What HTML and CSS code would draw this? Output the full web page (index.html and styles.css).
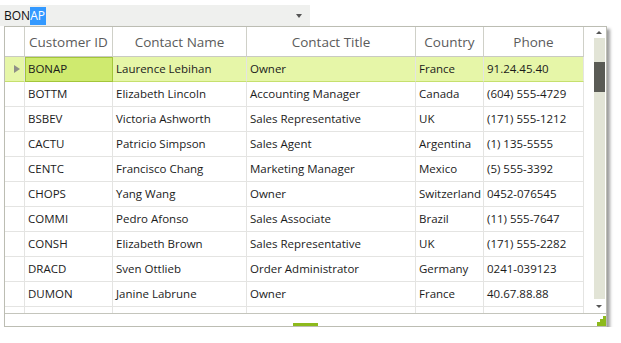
FILE: index.html
```html
<!DOCTYPE html>
<html lang="en">
<head>
    <meta charset="UTF-8">
    <meta name="viewport" content="width=device-width, initial-scale=1.0">
    <title>Customers Grid</title>
    <link rel="stylesheet" href="styles.css">
</head>
<body>
    <div class="combo">
        <span class="combo-text">BON<span class="sel">AP</span></span>
        <span class="combo-arrow"></span>
    </div>

    <div class="grid">
        <div class="main">
            <div class="table-wrap">
                <table>
                    <colgroup>
                        <col style="width: 20px">
                        <col style="width: 88px">
                        <col style="width: 134px">
                        <col style="width: 169px">
                        <col style="width: 68px">
                        <col style="width: 100px">
                    </colgroup>
                    <thead>
                        <tr>
                            <th class="rh"></th>
                            <th>Customer ID</th>
                            <th>Contact Name</th>
                            <th>Contact Title</th>
                            <th>Country</th>
                            <th>Phone</th>
                        </tr>
                    </thead>
                    <tbody>
                        <tr class="selected">
                            <td class="rh"><span class="pointer"></span></td>
                            <td class="current">BONAP</td>
                            <td>Laurence Lebihan</td>
                            <td>Owner</td>
                            <td>France</td>
                            <td>91.24.45.40</td>
                        </tr>
                        <tr>
                            <td class="rh"></td>
                            <td>BOTTM</td>
                            <td>Elizabeth Lincoln</td>
                            <td>Accounting Manager</td>
                            <td>Canada</td>
                            <td>(604) 555-4729</td>
                        </tr>
                        <tr>
                            <td class="rh"></td>
                            <td>BSBEV</td>
                            <td>Victoria Ashworth</td>
                            <td>Sales Representative</td>
                            <td>UK</td>
                            <td>(171) 555-1212</td>
                        </tr>
                        <tr>
                            <td class="rh"></td>
                            <td>CACTU</td>
                            <td>Patricio Simpson</td>
                            <td>Sales Agent</td>
                            <td>Argentina</td>
                            <td>(1) 135-5555</td>
                        </tr>
                        <tr>
                            <td class="rh"></td>
                            <td>CENTC</td>
                            <td>Francisco Chang</td>
                            <td>Marketing Manager</td>
                            <td>Mexico</td>
                            <td>(5) 555-3392</td>
                        </tr>
                        <tr>
                            <td class="rh"></td>
                            <td>CHOPS</td>
                            <td>Yang Wang</td>
                            <td>Owner</td>
                            <td>Switzerland</td>
                            <td>0452-076545</td>
                        </tr>
                        <tr>
                            <td class="rh"></td>
                            <td>COMMI</td>
                            <td>Pedro Afonso</td>
                            <td>Sales Associate</td>
                            <td>Brazil</td>
                            <td>(11) 555-7647</td>
                        </tr>
                        <tr>
                            <td class="rh"></td>
                            <td>CONSH</td>
                            <td>Elizabeth Brown</td>
                            <td>Sales Representative</td>
                            <td>UK</td>
                            <td>(171) 555-2282</td>
                        </tr>
                        <tr>
                            <td class="rh"></td>
                            <td>DRACD</td>
                            <td>Sven Ottlieb</td>
                            <td>Order Administrator</td>
                            <td>Germany</td>
                            <td>0241-039123</td>
                        </tr>
                        <tr>
                            <td class="rh"></td>
                            <td>DUMON</td>
                            <td>Janine Labrune</td>
                            <td>Owner</td>
                            <td>France</td>
                            <td>40.67.88.88</td>
                        </tr>
                        <tr>
                            <td class="rh"></td>
                            <td></td>
                            <td></td>
                            <td></td>
                            <td></td>
                            <td></td>
                        </tr>
                    </tbody>
                </table>
            </div>
            <div class="vscroll">
                <span class="arrow-up"></span>
                <div class="track">
                    <div class="thumb"></div>
                </div>
                <span class="arrow-down"></span>
            </div>
        </div>
        <div class="hscroll">
            <div class="hthumb"></div>
            <svg class="grip" width="9" height="10" viewBox="0 0 9 10">
                <polygon points="9,0 9,10 0,10 0,6 3,6 3,3 6,3 6,0" fill="#8dba1c"/>
            </svg>
        </div>
    </div>
</body>
</html>
```

FILE: styles.css
```css
body {
    margin: 0;
    padding: 0;
    background: #fff;
    font-family: "Open Sans", "Noto Sans", sans-serif;
    color: #1b1b1b;
}

.combo {
    margin-top: 5px;
    width: 310px;
    height: 21px;
    background: #eff0ee;
    display: flex;
    align-items: center;
    justify-content: space-between;
    box-sizing: border-box;
    padding: 0 8px 0 4px;
}

.combo-text {
    font-size: 12px;
    line-height: 12px;
    color: #111;
}

.combo-text .sel {
    background: #3399ff;
    color: #fff;
    padding: 0 1px 1px 0;
}

.combo-arrow {
    width: 0;
    height: 0;
    border-left: 3px solid transparent;
    border-right: 3px solid transparent;
    border-top: 4px solid #555;
    margin-top: 1px;
}

.grid {
    margin-left: 4px;
    width: 603px;
    box-sizing: border-box;
    border: 1px solid #bcbdb3;
    box-shadow: 3px 3px 3px rgba(0, 0, 0, 0.38);
    background: #fff;
}

.main {
    display: flex;
    height: 286px;
}

.table-wrap {
    width: 579px;
    overflow: hidden;
}

table {
    table-layout: fixed;
    width: 579px;
    border-collapse: separate;
    border-spacing: 0;
}

th, td {
    box-sizing: border-box;
    white-space: nowrap;
    overflow: hidden;
    border-right: 1px solid #e4e4e2;
    border-bottom: 1px solid #e4e4e2;
}

th {
    height: 30px;
    font-weight: normal;
    font-size: 13.5px;
    color: #5b5b5b;
    text-align: center;
    border-right-color: #cfd0c8;
    border-bottom-color: #c9cac2;
    padding: 0;
}

td {
    height: 25px;
    font-size: 11.5px;
    padding: 0 3px 2px;
}

th.rh, td.rh {
    padding: 0;
}

tr.selected td {
    background: #e6f6a8;
    border-bottom-color: #c6e06e;
}

tr.selected td.current {
    background: #cfea6f;
    box-shadow: inset 1px 0 0 #a3c63a, inset 0 1px 0 #a3c63a;
    border-right-color: #a3c63a;
    border-bottom-color: #a3c63a;
}

.pointer {
    display: block;
    width: 0;
    height: 0;
    margin: -1px 0 0 9px;
    border-top: 4px solid transparent;
    border-bottom: 4px solid transparent;
    border-left: 6px solid #8f9088;
}

.vscroll {
    width: 22px;
    display: flex;
    flex-direction: column;
    align-items: center;
    padding: 4px 0 0 8px;
    box-sizing: border-box;
}

.arrow-up {
    width: 0;
    height: 0;
    border-left: 3px solid transparent;
    border-right: 3px solid transparent;
    border-bottom: 3px solid #555;
}

.arrow-down {
    width: 0;
    height: 0;
    margin-top: 6px;
    border-left: 3px solid transparent;
    border-right: 3px solid transparent;
    border-top: 3px solid #555;
}

.track {
    margin-top: 4px;
    width: 11px;
    height: 261px;
    background: #e2e4d6;
}

.thumb {
    margin-top: 24px;
    height: 30px;
    background: #5a5b55;
}

.hscroll {
    height: 13px;
    box-sizing: border-box;
    border-top: 1px solid #c4c5bc;
    display: flex;
    align-items: flex-end;
}

.hthumb {
    margin-left: 288px;
    width: 25px;
    height: 3px;
    background: #8dba1c;
}

.grip {
    margin-left: auto;
    display: block;
}
```
